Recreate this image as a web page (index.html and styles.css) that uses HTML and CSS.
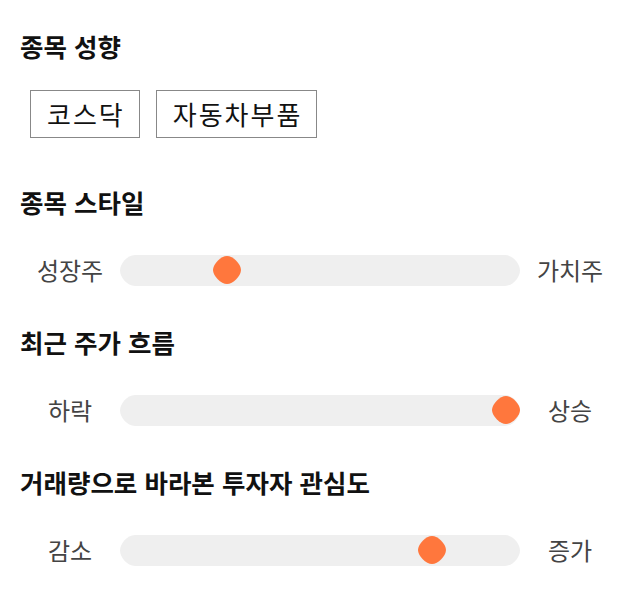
FILE: index.html
```html
<!DOCTYPE html>
<html lang="ko">
<head>
<meta charset="utf-8">
<link rel="stylesheet" href="styles.css">
</head>
<body>
<main class="page">
  <section class="section">
    <h2 class="title">종목 성향</h2>
    <div class="tags">
      <span class="tag">코스닥</span>
      <span class="tag">자동차부품</span>
    </div>
  </section>

  <section class="section">
    <h2 class="title">종목 스타일</h2>
    <div class="slider">
      <span class="label">성장주</span>
      <div class="track">
        <svg class="track-bg" width="400" height="31" viewBox="0 0 400 31"><path d="M15,0 H385 C393,0 400,9 400,15.5 C400,22 393,31 385,31 H15 C7,31 0,22 0,15.5 C0,9 7,0 15,0 Z" fill="#efefef"/></svg>
        <svg class="thumb" style="--v:0.25" width="28" height="28" viewBox="0 0 28 28"><path d="M14,0 C20,0 28,8 28,14 C28,20 20,28 14,28 C8,28 0,20 0,14 C0,8 8,0 14,0 Z" fill="#ff773d"/></svg>
      </div>
      <span class="label">가치주</span>
    </div>
  </section>

  <section class="section">
    <h2 class="title">최근 주가 흐름</h2>
    <div class="slider">
      <span class="label">하락</span>
      <div class="track">
        <svg class="track-bg" width="400" height="31" viewBox="0 0 400 31"><path d="M15,0 H385 C393,0 400,9 400,15.5 C400,22 393,31 385,31 H15 C7,31 0,22 0,15.5 C0,9 7,0 15,0 Z" fill="#efefef"/></svg>
        <svg class="thumb" style="--v:1" width="28" height="28" viewBox="0 0 28 28"><path d="M14,0 C20,0 28,8 28,14 C28,20 20,28 14,28 C8,28 0,20 0,14 C0,8 8,0 14,0 Z" fill="#ff773d"/></svg>
      </div>
      <span class="label">상승</span>
    </div>
  </section>

  <section class="section">
    <h2 class="title">거래량으로 바라본 투자자 관심도</h2>
    <div class="slider">
      <span class="label">감소</span>
      <div class="track">
        <svg class="track-bg" width="400" height="31" viewBox="0 0 400 31"><path d="M15,0 H385 C393,0 400,9 400,15.5 C400,22 393,31 385,31 H15 C7,31 0,22 0,15.5 C0,9 7,0 15,0 Z" fill="#efefef"/></svg>
        <svg class="thumb" style="--v:0.8" width="28" height="28" viewBox="0 0 28 28"><path d="M14,0 C20,0 28,8 28,14 C28,20 20,28 14,28 C8,28 0,20 0,14 C0,8 8,0 14,0 Z" fill="#ff773d"/></svg>
      </div>
      <span class="label">증가</span>
    </div>
  </section>
</main>
</body>
</html>
```

FILE: styles.css
```css
html, body {
  margin: 0;
  padding: 0;
  background: #ffffff;
}

body {
  font-family: "Noto Sans CJK KR", "Noto Sans", sans-serif;
  color: #111111;
}

.page {
  display: flex;
  flex-direction: column;
  gap: 36px;
  padding: 30px 20px;
}

.section {
  display: flex;
  flex-direction: column;
}

.section:first-child {
  margin-bottom: 12px;
}

.title {
  margin: 0;
  font-size: 25.5px;
  line-height: 32px;
  font-weight: 700;
  color: #111111;
}

.tags {
  display: flex;
  gap: 16px;
  margin: 28px 0 0 10px;
}

.tag {
  display: flex;
  align-items: center;
  justify-content: center;
  box-sizing: border-box;
  height: 48px;
  padding: 0 14px 0 16px;
  border: 1px solid #888888;
  font-size: 26px;
  line-height: 32px;
  letter-spacing: 2px;
  color: #111111;
}

.slider {
  display: grid;
  grid-template-columns: 100px 1fr 100px;
  align-items: center;
  height: 40px;
  margin-top: 32px;
}

.label {
  text-align: center;
  font-size: 24px;
  line-height: 32px;
  color: #444444;
}

.track {
  position: relative;
  width: 400px;
  height: 31px;
}

.track-bg {
  display: block;
}

.thumb {
  position: absolute;
  top: 1.5px;
  left: calc(var(--v) * (100% - 28px));
}
```
